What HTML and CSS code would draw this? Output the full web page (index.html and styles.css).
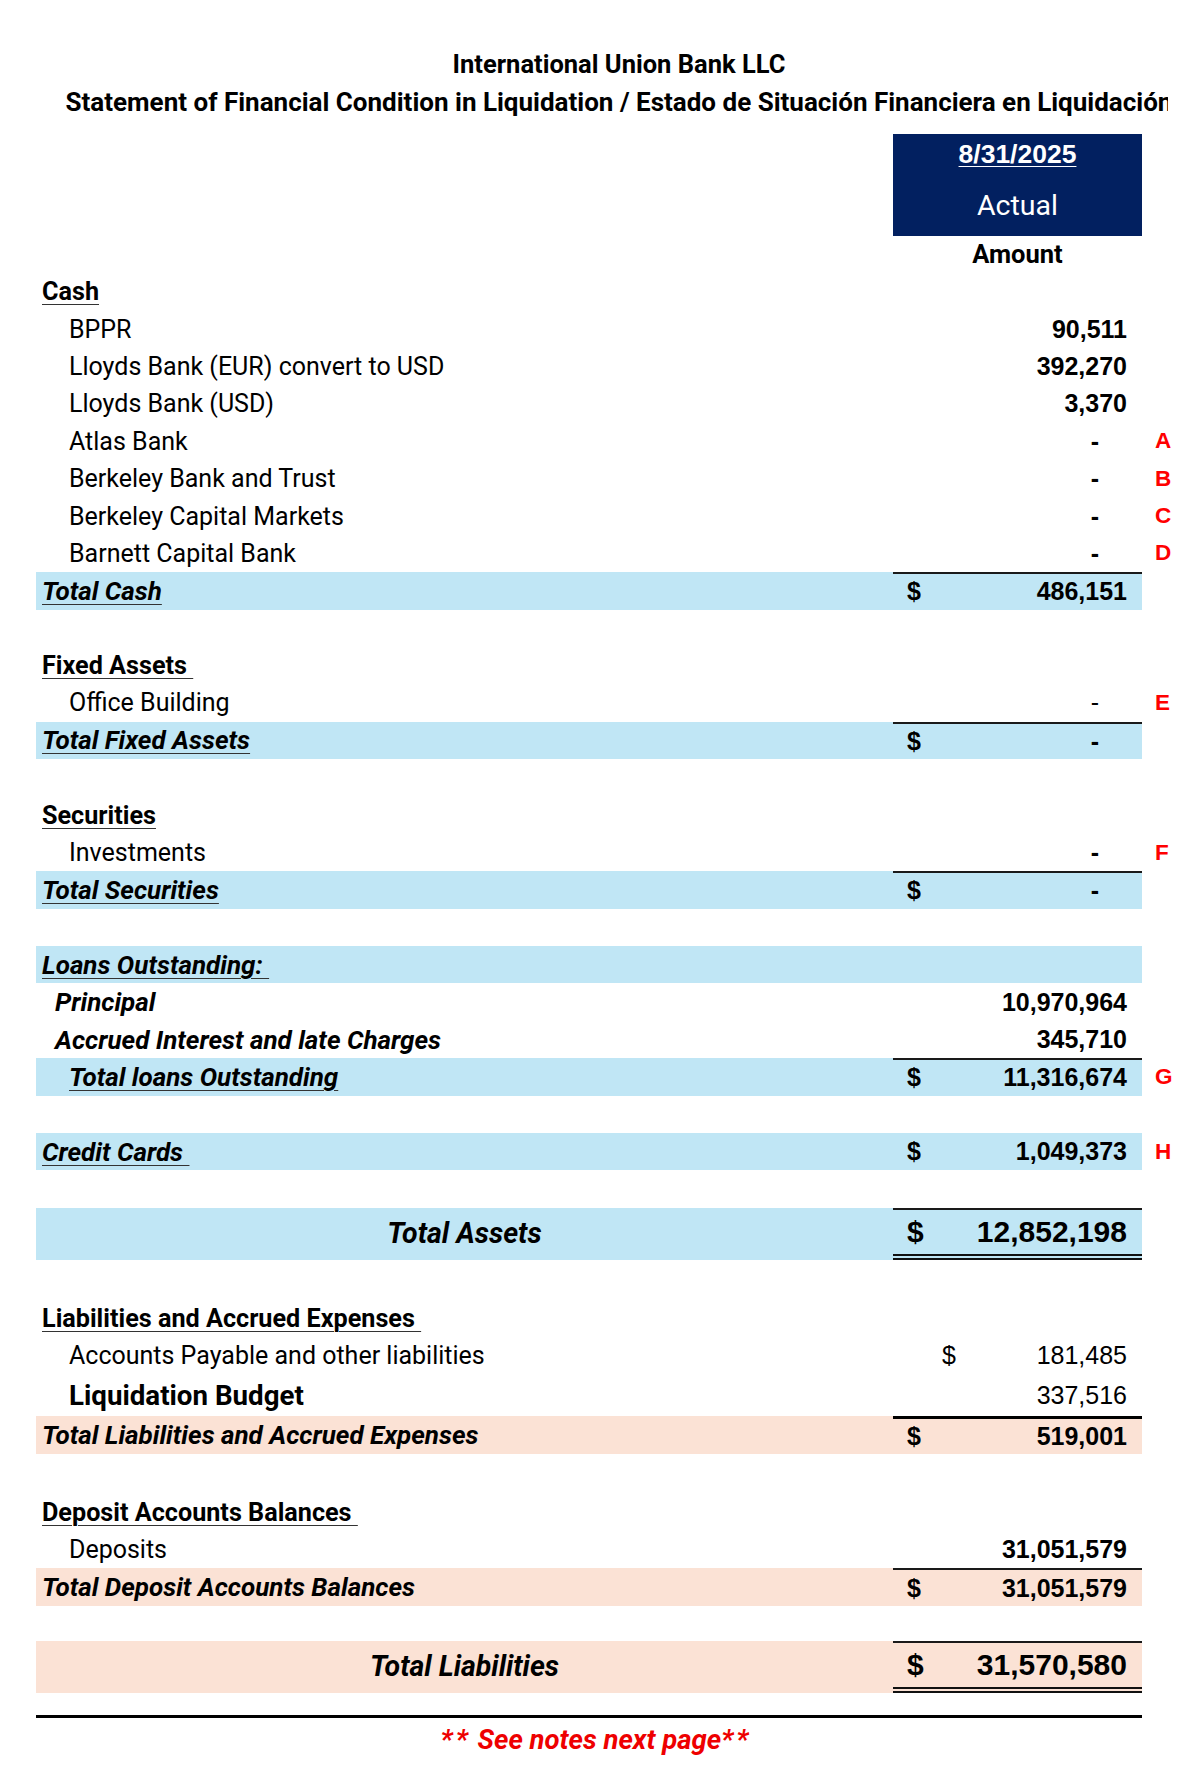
FILE: index.html
```html
<!DOCTYPE html>
<html>
<head>
<meta charset="utf-8">
<link rel="stylesheet" href="styles.css">
</head>
<body>
<div class="page">
  <div class="title">
    <div class="t1">International Union Bank LLC</div>
    <div class="t2clip"><div class="t2">Statement of Financial Condition in Liquidation / Estado de Situación Financiera en Liquidación</div></div>
  </div>

  <div class="head">
    <div class="hspacer"></div>
    <div class="hbox">
      <div class="date">8/31/2025</div>
      <div class="actual">Actual</div>
    </div>
  </div>
  <div class="head">
    <div class="hspacer"></div>
    <div class="amount-h">Amount</div>
  </div>

  <div class="sheet">
    <div class="row"><div class="main"><div class="lbl sec"><span class="u">Cash</span></div><div class="amt"></div></div><div class="note"></div></div>
    <div class="row"><div class="main"><div class="lbl ind">BPPR</div><div class="amt"><span class="num">90,511</span></div></div><div class="note"></div></div>
    <div class="row"><div class="main"><div class="lbl ind">Lloyds Bank (EUR) convert to USD</div><div class="amt"><span class="num">392,270</span></div></div><div class="note"></div></div>
    <div class="row"><div class="main"><div class="lbl ind">Lloyds Bank (USD)</div><div class="amt"><span class="num">3,370</span></div></div><div class="note"></div></div>
    <div class="row"><div class="main"><div class="lbl ind">Atlas Bank</div><div class="amt"><span class="num dash">-</span></div></div><div class="note">A</div></div>
    <div class="row"><div class="main"><div class="lbl ind">Berkeley Bank and Trust</div><div class="amt"><span class="num dash">-</span></div></div><div class="note">B</div></div>
    <div class="row"><div class="main"><div class="lbl ind">Berkeley Capital Markets</div><div class="amt"><span class="num dash">-</span></div></div><div class="note">C</div></div>
    <div class="row"><div class="main"><div class="lbl ind">Barnett Capital Bank</div><div class="amt"><span class="num dash">-</span></div></div><div class="note">D</div></div>
    <div class="row blue"><div class="main"><div class="lbl tot"><span class="u">Total Cash</span></div><div class="amt bt"><span class="cur">$</span><span class="num">486,151</span></div></div><div class="note"></div></div>
    <div class="row"></div>

    <div class="row"><div class="main"><div class="lbl sec"><span class="u">Fixed Assets&nbsp;</span></div><div class="amt"></div></div><div class="note"></div></div>
    <div class="row"><div class="main"><div class="lbl ind">Office Building</div><div class="amt reg"><span class="num dash">-</span></div></div><div class="note">E</div></div>
    <div class="row blue"><div class="main"><div class="lbl tot"><span class="u">Total Fixed Assets</span></div><div class="amt bt"><span class="cur">$</span><span class="num dash">-</span></div></div><div class="note"></div></div>
    <div class="row"></div>

    <div class="row"><div class="main"><div class="lbl sec"><span class="u">Securities</span></div><div class="amt"></div></div><div class="note"></div></div>
    <div class="row"><div class="main"><div class="lbl ind">Investments</div><div class="amt"><span class="num dash">-</span></div></div><div class="note">F</div></div>
    <div class="row blue"><div class="main"><div class="lbl tot"><span class="u">Total Securities</span></div><div class="amt bt"><span class="cur">$</span><span class="num dash">-</span></div></div><div class="note"></div></div>
    <div class="row"></div>

    <div class="row blue"><div class="main"><div class="lbl tot"><span class="u">Loans Outstanding:&nbsp;</span></div><div class="amt"></div></div><div class="note"></div></div>
    <div class="row"><div class="main"><div class="lbl tot ind2">Principal</div><div class="amt"><span class="num">10,970,964</span></div></div><div class="note"></div></div>
    <div class="row"><div class="main"><div class="lbl tot ind2">Accrued Interest and late Charges</div><div class="amt"><span class="num">345,710</span></div></div><div class="note"></div></div>
    <div class="row blue"><div class="main"><div class="lbl tot ind"><span class="u">Total loans Outstanding</span></div><div class="amt bt"><span class="cur">$</span><span class="num">11,316,674</span></div></div><div class="note">G</div></div>
    <div class="row"></div>

    <div class="row blue"><div class="main"><div class="lbl tot"><span class="u">Credit Cards&nbsp;</span></div><div class="amt"><span class="cur">$</span><span class="num">1,049,373</span></div></div><div class="note">H</div></div>
    <div class="row"></div>

    <div class="row blue grand"><div class="main"><div class="lbl tot center">Total Assets</div><div class="amt bt dbl"><span class="cur">$</span><span class="num">12,852,198</span></div></div><div class="note"></div></div>
    <div class="row gap40"></div>

    <div class="row"><div class="main"><div class="lbl sec"><span class="u">Liabilities and Accrued Expenses&nbsp;</span></div><div class="amt"></div></div><div class="note"></div></div>
    <div class="row"><div class="main"><div class="lbl ind">Accounts Payable and other liabilities</div><div class="amt reg"><span class="cur inset">$</span><span class="num">181,485</span></div></div><div class="note"></div></div>
    <div class="row h41"><div class="main"><div class="lbl ind budget">Liquidation Budget</div><div class="amt reg"><span class="num">337,516</span></div></div><div class="note"></div></div>
    <div class="row pink h38"><div class="main"><div class="lbl tot">Total Liabilities and Accrued Expenses</div><div class="amt bt3"><span class="cur">$</span><span class="num">519,001</span></div></div><div class="note"></div></div>
    <div class="row gap40"></div>

    <div class="row"><div class="main"><div class="lbl sec"><span class="u">Deposit Accounts Balances&nbsp;</span></div><div class="amt"></div></div><div class="note"></div></div>
    <div class="row"><div class="main"><div class="lbl ind">Deposits</div><div class="amt"><span class="num">31,051,579</span></div></div><div class="note"></div></div>
    <div class="row pink"><div class="main"><div class="lbl tot">Total Deposit Accounts Balances</div><div class="amt bt"><span class="cur">$</span><span class="num">31,051,579</span></div></div><div class="note"></div></div>
    <div class="row h35"></div>

    <div class="row pink grand"><div class="main"><div class="lbl tot center">Total Liabilities</div><div class="amt bt dbl"><span class="cur">$</span><span class="num">31,570,580</span></div></div><div class="note"></div></div>

    <div class="rule"></div>
    <div class="notes"><span class="ast">**</span> See notes next page<span class="ast">**</span></div>
  </div>
</div>
</body>
</html>
```

FILE: styles.css
```css
* { box-sizing: border-box; }
html, body { margin: 0; padding: 0; background: #fff; }
body { width: 1200px; overflow-x: hidden; font-family: "Roboto", "Liberation Sans", sans-serif; color: #000; }

.page { padding-top: 46px; }

.title { margin-left: 36px; }
.t1 { width: 1166px; height: 36px; line-height: 36px; text-align: center; font-weight: 700; font-size: 25.5px; }
.t2clip { width: 1132px; height: 38px; overflow: hidden; margin-bottom: 14px; }
.t2 { width: 1166px; line-height: 40px; text-align: center; white-space: nowrap; font-weight: 700; font-size: 26px; }

.head { display: grid; grid-template-columns: 893px 249px; }
.hbox { height: 102px; background: #022060; color: #fff; display: flex; flex-direction: column; align-items: center; }
.date { margin-top: -1px; height: 42px; line-height: 42px; font-family: "Liberation Sans", Arial, sans-serif; font-weight: 700; font-size: 26.5px; text-decoration: underline; text-decoration-thickness: 1px; text-underline-offset: 3px; }
.actual { margin-top: 9px; height: 44px; line-height: 44px; font-size: 28.5px; }
.amount-h { height: 37px; line-height: 37px; text-align: center; font-weight: 700; font-size: 25.5px; }

.sheet { padding-left: 36px; }
.row { display: grid; grid-template-columns: 1106px 58px; height: 37.4px; }
.main { display: grid; grid-template-columns: 857px 249px; height: 100%; }
.blue .main { background: #c0e6f5; }
.pink .main { background: #fbe2d5; }

.lbl { display: flex; align-items: center; padding-left: 6px; font-size: 25px; white-space: pre; }
.lbl.ind { padding-left: 33px; }
.lbl.ind2 { padding-left: 19px; }
.lbl.sec { font-weight: 700; font-size: 25.2px; }
.lbl.tot { font-weight: 700; font-style: italic; font-size: 26px; }
.lbl.center { justify-content: center; padding-left: 0; font-size: 28.5px; }
.lbl.budget { font-weight: 700; font-size: 27.7px; }
.u { text-decoration: underline; text-decoration-color: #333; text-decoration-thickness: 1px; text-underline-offset: 4px; }

.amt { display: flex; align-items: center; padding: 0 15px 0 14px; font-family: "Liberation Sans", Arial, sans-serif; font-size: 25px; font-weight: 700; }
.amt.reg { font-weight: 400; }
.amt .num { margin-left: auto; }
.amt .dash { padding-right: 28px; }
.amt .cur.inset { margin-left: 35px; }
.amt.bt { border-top: 2px solid #1a1a1a; }
.amt.bt3 { border-top: 3px solid #000; }
.amt.dbl { border-bottom: 6px double #111; font-size: 30px; }

.note { display: flex; align-items: center; padding-left: 13px; color: #f00; font-family: "Liberation Sans", Arial, sans-serif; font-weight: 700; font-size: 22.5px; }

.row.grand { height: 52px; }
.row.gap40 { height: 40px; }
.row.h41 { height: 41px; }
.row.h38 { height: 38px; }
.row.h35 { height: 35px; }

.rule { width: 1106px; margin-top: 22px; border-top: 3px solid #000; }
.notes { width: 1120px; text-align: center; margin-top: 6px; line-height: 32px; color: #e00; font-weight: 700; font-style: italic; font-size: 27.5px; }
.notes .ast { letter-spacing: 3px; }
```
